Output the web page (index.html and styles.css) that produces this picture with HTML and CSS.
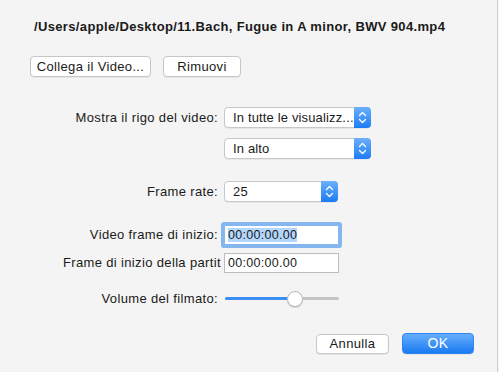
FILE: index.html
```html
<!DOCTYPE html>
<html lang="it">
<head>
<meta charset="utf-8">
<title>Video</title>
<link rel="stylesheet" href="styles.css">
</head>
<body>
<div class="dialog">
  <div class="title">/Users/apple/Desktop/11.Bach, Fugue in A minor, BWV 904.mp4</div>
  <div class="btn-row">
    <button class="btn btn-link">Collega il Video...</button>
    <button class="btn btn-remove">Rimuovi</button>
  </div>

  <div class="form">
    <div class="row row-show">
      <div class="label">Mostra il rigo del video:</div>
      <div class="popup popup-wide"><span class="popup-text">In tutte le visualizz...</span><span class="stepper"><svg width="9" height="13" viewBox="0 0 9 13"><path d="M1.5 4.5 L4.5 1.5 L7.5 4.5 M1.5 8.5 L4.5 11.5 L7.5 8.5" fill="none" stroke="#fff" stroke-width="1.3" stroke-linecap="round" stroke-linejoin="round"/></svg></span></div>
    </div>
    <div class="row row-pos">
      <div class="label"></div>
      <div class="popup popup-wide"><span class="popup-text">In alto</span><span class="stepper"><svg width="9" height="13" viewBox="0 0 9 13"><path d="M1.5 4.5 L4.5 1.5 L7.5 4.5 M1.5 8.5 L4.5 11.5 L7.5 8.5" fill="none" stroke="#fff" stroke-width="1.3" stroke-linecap="round" stroke-linejoin="round"/></svg></span></div>
    </div>
    <div class="row row-rate">
      <div class="label">Frame rate:</div>
      <div class="popup popup-narrow"><span class="popup-text">25</span><span class="stepper"><svg width="9" height="13" viewBox="0 0 9 13"><path d="M1.5 4.5 L4.5 1.5 L7.5 4.5 M1.5 8.5 L4.5 11.5 L7.5 8.5" fill="none" stroke="#fff" stroke-width="1.3" stroke-linecap="round" stroke-linejoin="round"/></svg></span></div>
    </div>
    <div class="row row-start">
      <div class="label">Video frame di inizio:</div>
      <div class="field field-focus"><span class="sel">00:00:00.00</span></div>
    </div>
    <div class="row row-score">
      <div class="label label-left">Frame di inizio della partit</div>
      <div class="field">00:00:00.00</div>
    </div>
    <div class="row row-volume">
      <div class="label">Volume del filmato:</div>
      <div class="slider">
        <div class="track-fill"></div>
        <div class="knob"></div>
        <div class="track-rest"></div>
      </div>
    </div>
  </div>

  <div class="footer">
    <button class="btn btn-cancel">Annulla</button>
    <button class="btn btn-ok">OK</button>
  </div>
</div>
</body>
</html>
```

FILE: styles.css
```css
html, body {
  margin: 0;
  padding: 0;
  background: #f4f4f4;
}
body {
  width: 499px;
  height: 372px;
  overflow: hidden;
  font-family: "Liberation Sans", Arial, sans-serif;
  font-size: 13px;
  letter-spacing: 0.35px;
  color: #1a1a1a;
}
.dialog {
  width: 498px;
  height: 372px;
  border-right: 1px solid #cfcfcf;
  box-sizing: border-box;
  background: #f4f4f4;
}
.title {
  padding: 19px 0 0 34px;
  font-weight: bold;
  line-height: 16px;
  white-space: nowrap;
}
.btn {
  font-family: inherit;
  font-size: 13px;
  letter-spacing: 0.35px;
  color: #1a1a1a;
  background: #fff;
  border: 1px solid #c6c6c6;
  border-radius: 4px;
  box-shadow: 0 1px 0 rgba(0,0,0,0.06);
  height: 21px;
  padding: 0;
  line-height: 19px;
  box-sizing: border-box;
  margin: 0;
}
.btn-row {
  display: flex;
  gap: 12px;
  margin: 21px 0 0 30px;
}
.btn-link { width: 121px; }
.btn-remove { width: 78px; }

.form {
  margin-left: 60px;
  margin-top: 30px;
}
.row {
  display: flex;
  align-items: center;
  gap: 6px;
}
.label {
  width: 158px;
  flex: none;
  text-align: right;
  white-space: nowrap;
  line-height: 16px;
}
.label-left {
  text-align: left;
  padding-left: 3px;
  box-sizing: border-box;
}
.row-pos { margin-top: 10px; }
.row-rate { margin-top: 22px; }
.row-start { margin-top: 23px; }
.row-score { margin-top: 8px; }
.row-volume { margin-top: 17px; }

.popup {
  height: 21px;
  box-sizing: border-box;
  background: #fff;
  border: 1px solid #c8c8c8;
  border-radius: 4px;
  box-shadow: 0 1px 0 rgba(0,0,0,0.05);
  display: flex;
  align-items: stretch;
}
.popup-wide { width: 147px; }
.popup-narrow { width: 114px; }
.popup-text {
  flex: 1;
  min-width: 0;
  padding-left: 8px;
  line-height: 19px;
  white-space: nowrap;
  letter-spacing: 0.15px;
}
.stepper {
  width: 17px;
  flex: none;
  background: linear-gradient(#6cb0fb, #1c7cf4);
  border-radius: 0 4px 4px 0;
  display: flex;
  align-items: center;
  justify-content: center;
  margin: -1px -1px -1px 0;
}

.field {
  width: 115px;
  height: 20px;
  box-sizing: border-box;
  background: #fff;
  border: 1px solid #bdbdbd;
  line-height: 18px;
  padding-left: 3px;
  font-size: 12.5px;
  letter-spacing: 0.3px;
}
.field-focus {
  box-shadow: 0 0 0 3px #86b6ef;
  border-color: #86b6ef;
  border-radius: 1px;
}
.sel {
  background: #b3d6fd;
}

.slider {
  width: 114px;
  height: 17px;
  display: flex;
  align-items: center;
  margin-left: 1px;
}
.track-fill {
  width: 62px;
  height: 3px;
  background: #3b8ff4;
  border-radius: 2px 0 0 2px;
}
.knob {
  width: 16px;
  height: 16px;
  box-sizing: border-box;
  border-radius: 50%;
  background: #fff;
  border: 1px solid #b8b8b8;
  box-shadow: 0 1px 1px rgba(0,0,0,0.15);
  flex: none;
}
.track-rest {
  flex: 1;
  height: 3px;
  background: #c4c4c4;
  border-radius: 0 2px 2px 0;
}

.footer {
  display: flex;
  justify-content: flex-end;
  align-items: center;
  gap: 13px;
  margin-top: 26px;
  padding-right: 23px;
}
.btn-cancel {
  width: 73px;
  height: 20px;
  line-height: 18px;
}
.btn-ok {
  width: 72px;
  height: 21px;
  background: linear-gradient(#66adfa, #1a7bf3);
  border-color: #2d86f2;
  color: #fff;
  font-size: 14px;
}
```
